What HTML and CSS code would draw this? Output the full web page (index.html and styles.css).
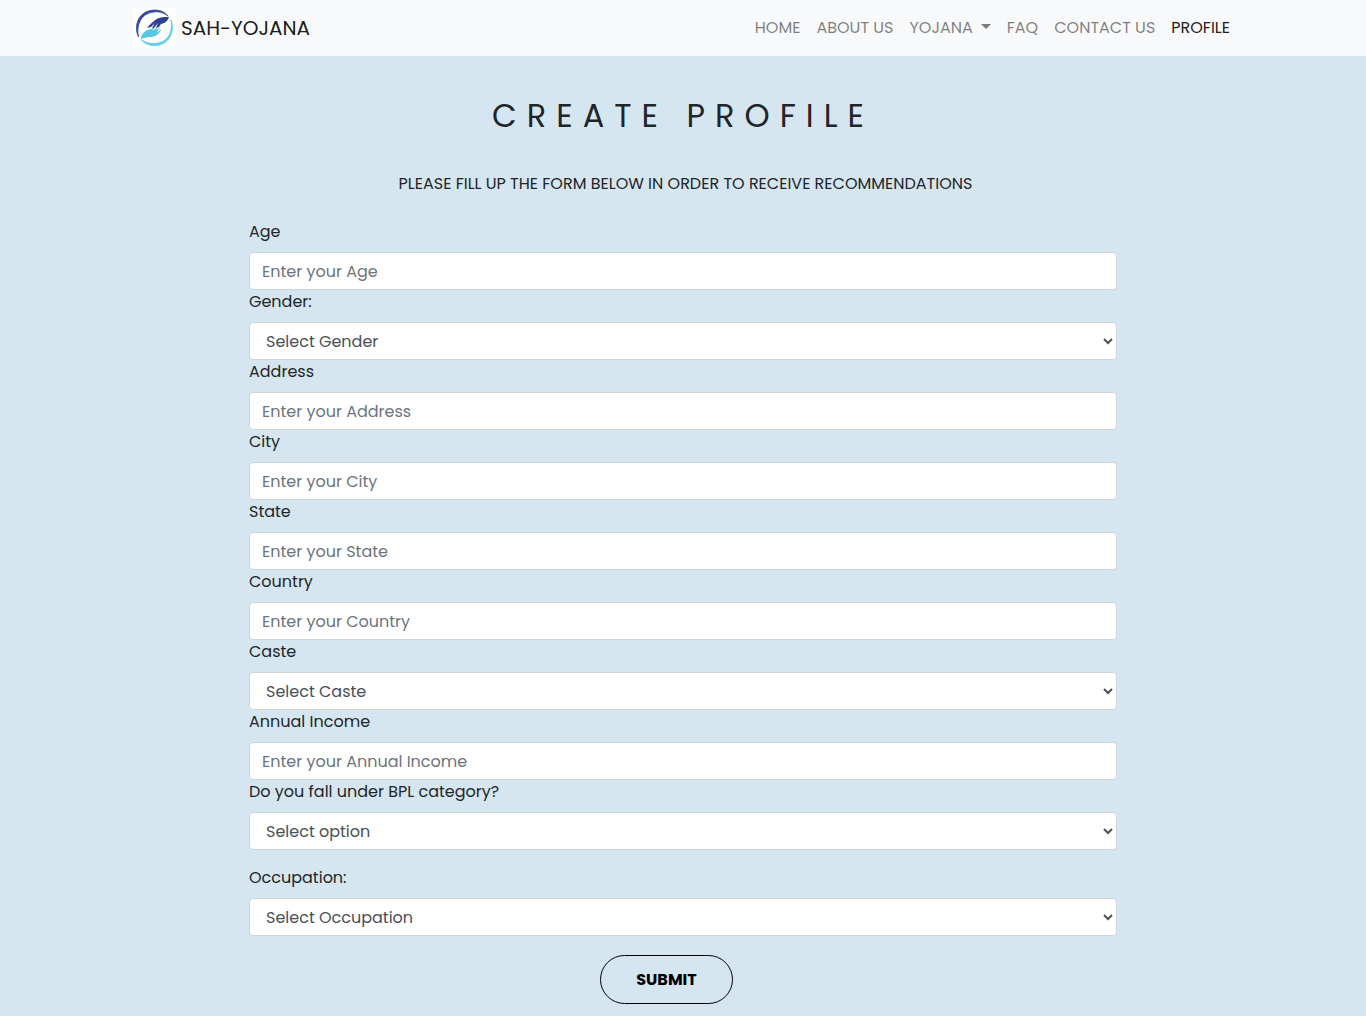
FILE: index.html
```html
<!DOCTYPE html>
<html lang="en">
<head>
<meta charset="utf-8">
<meta name="viewport" content="width=device-width, initial-scale=1">
<title>Sah-Yojana | Create Profile</title>
<link rel="stylesheet" href="styles.css">
</head>
<body>
<header class="navbar">
  <div class="navbar-inner">
    <a class="brand" href="#">
      <svg class="brand-logo" viewBox="0 0 43 40" aria-hidden="true">
        <rect width="43" height="40" fill="#fff"/>
        <path d="M5.500 29C0 17 6 2 22 2c5 0 10 2 13 6C30 4 25 3.500 21 4 8 5 3 17 5.500 29z" fill="#36479b" stroke="#36479b" stroke-width=".8"/>
        <path d="M38 12c5 12-3 25.500-16 25.500-6 0-11-2-14-6 4 3 9 4.500 14 4 13-1 18-11 16-23.500z" fill="#5ecbe8" stroke="#5ecbe8" stroke-width=".8"/>
        <path d="M36 9c-6 0-11 0-15 4-3 2-5 5-7 7l4-1 4-4-3 5 2 0 4-5-2 5 3-1 2-3c5-1 7-4 8-7z" fill="#2f3f93"/>
        <path d="M8 31c0-5 4-9 10-10l4-2-3 4 6-4-2 3 5-3-5 6 6-4c-4 6-7 8-12 8-4 0-6 1-9 2z" fill="#56c7e6"/>
      </svg>
      <span>SAH-YOJANA</span>
    </a>
    <nav class="nav" aria-label="Main">
      <a class="nav-link" href="#">HOME</a>
      <a class="nav-link" href="#">ABOUT US</a>
      <a class="nav-link dropdown" href="#">YOJANA</a>
      <a class="nav-link" href="#">FAQ</a>
      <a class="nav-link" href="#">CONTACT US</a>
      <a class="nav-link active" href="#" aria-current="page">PROFILE</a>
    </nav>
  </div>
</header>
<main class="page">
  <h1 class="title">CREATE PROFILE</h1>
  <p class="lead">PLEASE FILL UP THE FORM BELOW IN ORDER TO RECEIVE RECOMMENDATIONS</p>
  <form class="profile-form">
    <div class="field"><label for="age">Age</label><input class="control" id="age" type="text" placeholder="Enter your Age"></div>
    <div class="field"><label for="gender">Gender:</label><select class="control" id="gender"><option>Select Gender</option></select></div>
    <div class="field"><label for="address">Address</label><input class="control" id="address" type="text" placeholder="Enter your Address"></div>
    <div class="field"><label for="city">City</label><input class="control" id="city" type="text" placeholder="Enter your City"></div>
    <div class="field"><label for="state">State</label><input class="control" id="state" type="text" placeholder="Enter your State"></div>
    <div class="field"><label for="country">Country</label><input class="control" id="country" type="text" placeholder="Enter your Country"></div>
    <div class="field"><label for="caste">Caste</label><select class="control" id="caste"><option>Select Caste</option></select></div>
    <div class="field"><label for="income">Annual Income</label><input class="control" id="income" type="text" placeholder="Enter your Annual Income"></div>
    <div class="field"><label for="bpl">Do you fall under BPL category?</label><select class="control" id="bpl"><option>Select option</option></select></div>
    <div class="field spaced"><label for="occupation">Occupation:</label><select class="control" id="occupation"><option>Select Occupation</option></select></div>
    <div class="actions"><button class="submit" type="submit">SUBMIT</button></div>
  </form>
</main>
</body>
</html>
```
FILE: styles.css
```css
*, *::before, *::after { box-sizing: border-box; }

body {
  margin: 0;
  min-height: 100vh;
  background: #d6e6f0;
  color: #212529;
  font-family: Poppins, Inter, sans-serif;
  font-size: 16px;
  font-weight: 400;
  line-height: 24px;
}

.navbar { background: #f8f9fa; }

.navbar-inner {
  display: flex;
  align-items: center;
  justify-content: space-between;
  max-width: 1140px;
  min-height: 56px;
  margin: 0 auto;
  padding: 8px 15px 8px 20px;
}

.brand {
  display: flex;
  align-items: center;
  gap: 5px;
  color: rgba(0, 0, 0, 0.9);
  font-size: 20px;
  line-height: 30px;
  text-decoration: none;
}

.brand-logo { width: 43px; height: 40px; }

.nav { display: flex; }

.nav-link {
  padding: 8px;
  color: rgba(0, 0, 0, 0.5);
  text-decoration: none;
}

.nav-link.active { color: rgba(0, 0, 0, 0.9); }

.dropdown::after {
  content: "";
  display: inline-block;
  margin-left: 8px;
  vertical-align: 4px;
  border: 5px solid transparent;
  border-top-color: currentColor;
  border-bottom: 0;
}

.page {
  max-width: 898px;
  margin: 0 auto;
  padding: 36px 15px 12px;
}

.title {
  margin: 0;
  font-size: 32px;
  font-weight: 400;
  line-height: 48px;
  letter-spacing: 10px;
  text-align: center;
}

.lead {
  margin: 32px 0 24px;
  padding-left: 5px;
  text-align: center;
}

.field label { display: block; margin-bottom: 8px; }

.field.spaced { margin-top: 16px; }

.control {
  display: block;
  width: 100%;
  height: 38px;
  padding: 6px 12px;
  border: 1px solid #ced4da;
  border-radius: 4px;
  background-color: #fff;
  color: #495057;
  font: inherit;
}

.control::placeholder { color: #6c757d; opacity: 1; }

select.control { padding-right: 0; }

.actions {
  display: flex;
  justify-content: center;
  margin-top: 19px;
  padding-right: 33px;
}

.submit {
  min-width: 133px;
  padding: 12px 35px;
  border: 1px solid #000;
  border-radius: 25px;
  background: transparent;
  color: #000;
  font: inherit;
  font-weight: 700;
  line-height: 23px;
}
```
